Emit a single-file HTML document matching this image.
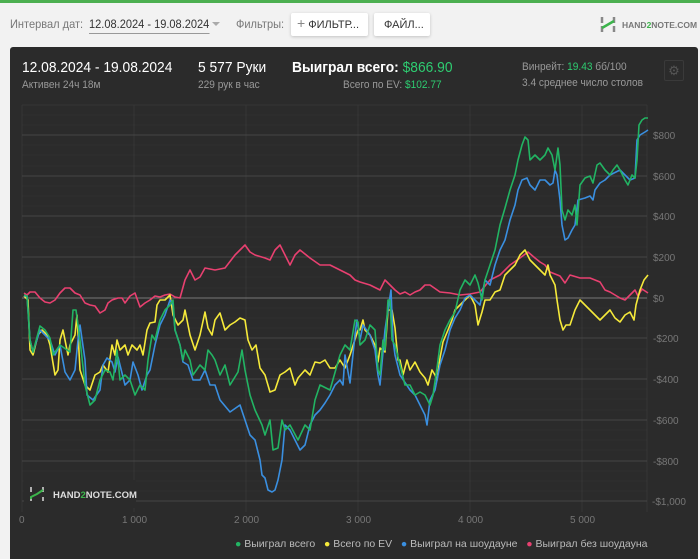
<!DOCTYPE html>
<html><head><meta charset="utf-8"><style>
*{margin:0;padding:0;box-sizing:border-box}
body{width:700px;height:559px;background:#f2f2f2;font-family:"Liberation Sans",sans-serif;position:relative;overflow:hidden}
.abs{position:absolute;white-space:nowrap}
.c{transform:scaleX(.92);transform-origin:left top}
</style></head><body>
<div class="abs" style="left:0;top:0;width:700px;height:3px;background:#4caf50"></div>
<div class="abs c" style="left:10px;top:17px;font-size:12px;color:#777">Интервал дат:</div>
<div class="abs c" style="left:89px;top:17px;font-size:12px;color:#333;border-bottom:1px solid #999;padding-bottom:2px">12.08.2024 - 19.08.2024</div>
<div class="abs" style="left:212px;top:22px;width:0;height:0;border-left:4px solid transparent;border-right:4px solid transparent;border-top:4px solid #aaa"></div>
<div class="abs c" style="left:236px;top:17px;font-size:12px;color:#777">Фильтры:</div>
<div class="abs" style="left:291px;top:13px;width:77px;height:23px;background:#fff;border-radius:2px;box-shadow:0 1px 3px rgba(0,0,0,.2);font-size:11px;color:#333;padding:5px 0 0 6px"><span style="color:#888;font-size:14px;line-height:11px">+</span> ФИЛЬТР...</div>
<div class="abs" style="left:374px;top:13px;width:56px;height:23px;background:#fff;border-radius:2px;box-shadow:0 1px 3px rgba(0,0,0,.2);font-size:11px;color:#333;padding:6px 0 0 10px">ФАЙЛ...</div>
<svg class="abs" style="left:600px;top:16px" width="16" height="17" viewBox="0 0 16 17"><path d="M2 1v6M2 10v6" stroke="#888" stroke-width="2.5"/><path d="M14 1v6M14 10v6" stroke="#888" stroke-width="2.5"/><path d="M2 12 L8 8.5 L14 5" stroke="#3cb44b" stroke-width="2.5" fill="none"/></svg>
<div class="abs" style="left:622px;top:20px;font-size:8.5px;font-weight:bold;color:#777">HAND<span style="color:#3cb44b">2</span>NOTE.COM</div>

<div class="abs" style="left:10px;top:47px;width:688px;height:512px;background:#2b2b2b;border-radius:3px 3px 0 0"></div>
<div class="abs c" style="left:22px;top:59px;font-size:15px;color:#fff">12.08.2024 - 19.08.2024</div>
<div class="abs c" style="left:22px;top:79px;font-size:11px;color:#999">Активен 24ч 18м</div>
<div class="abs c" style="left:198px;top:59px;font-size:15px;color:#fff">5 577 Руки</div>
<div class="abs c" style="left:198px;top:79px;font-size:11px;color:#999">229 рук в час</div>
<div class="abs c" style="left:292px;top:59px;font-size:15px;color:#fff;font-weight:bold">Выиграл всего: <span style="color:#2ecc71;font-weight:normal">$866.90</span></div>
<div class="abs c" style="left:343px;top:79px;font-size:11px;color:#999">Всего по EV: <span style="color:#2ecc71">$102.77</span></div>
<div class="abs c" style="left:522px;top:61px;font-size:11px;color:#999">Винрейт: <span style="color:#2ecc71">19.43</span> бб/100</div>
<div class="abs c" style="left:522px;top:77px;font-size:11px;color:#999">3.4 среднее число столов</div>
<div class="abs" style="left:664px;top:60px;width:20px;height:21px;border:1px solid #3a3a3a;border-radius:2px;color:#555;font-size:13px;text-align:center;line-height:19px">⚙</div>

<svg class="abs" style="left:0;top:0" width="700" height="559">
<g stroke="#2f2f2f" stroke-width="1">
<path d="M22 115H647M22 125H647M22 145H647M22 155H647M22 166H647M22 186H647M22 196H647M22 206H647M22 227H647M22 237H647M22 247H647M22 267H647M22 277H647M22 288H647M22 308H647M22 318H647M22 328H647M22 349H647M22 359H647M22 369H647M22 389H647M22 399H647M22 410H647M22 430H647M22 440H647M22 450H647M22 471H647M22 481H647M22 491H647"/>
</g>
<g stroke="#363636" stroke-width="1">
<path d="M22 105V512M134 105V512M246 105V512M358 105V512M470 105V512M582 105V512M647 105V512M22 105H647"/>
</g>
<g stroke="#454545" stroke-width="1">
<path d="M22 135H647M22 176H647M22 216H647M22 257H647M22 338H647M22 379H647M22 420H647M22 461H647M22 501H647"/>
</g>
<path d="M22 298H647" stroke="#777" stroke-width="1"/>
<g fill="none" stroke-width="1.6" stroke-linejoin="round">
<polyline stroke="#e84070" points="24,293 27,295 30,292 35,292 40,298 45,302 50,303 55,300 60,293 65,288 70,288 75,293 80,295 85,303 90,305 95,306 100,313 105,310 108,303 112,300 118,298 122,298 125,303 130,296 135,293 140,307 145,303 150,300 155,296 160,297 165,295 170,294 175,297 180,298 185,280 190,270 195,280 200,277 205,268 215,270 225,268 235,255 240,250 245,245 250,252 255,255 265,258 270,260 275,250 280,245 285,255 290,265 295,255 300,250 310,258 320,265 330,265 340,270 350,275 355,280 360,282 370,285 380,290 385,280 390,285 395,290 400,294 405,292 410,295 415,292 420,290 425,285 430,285 440,292 450,293 460,295 470,294 480,292 490,280 500,275 510,265 520,258 528,252 535,258 540,262 545,265 550,272 560,276 565,283 570,275 580,278 590,278 600,282 605,290 610,292 620,298 625,300 630,295 635,290 638,296 642,289 648,293"/>
<polyline stroke="#f5e93a" points="24,296 28,300 30,350 33,355 38,335 42,330 47,335 50,345 55,375 58,370 60,340 63,330 66,345 68,355 70,345 75,335 77,315 80,370 85,385 90,390 95,375 100,372 103,365 108,372 112,345 115,355 117,340 120,350 125,345 128,355 132,345 137,350 140,345 143,355 147,330 150,323 155,322 157,305 160,300 165,300 170,295 173,315 178,325 183,320 185,310 190,335 195,350 200,335 205,312 208,328 212,335 215,320 220,313 225,330 230,325 235,322 240,318 245,320 248,340 252,350 256,345 260,368 265,375 270,392 275,390 280,375 285,372 290,368 295,385 298,378 305,370 310,375 315,362 320,363 325,360 330,368 335,368 340,360 345,368 350,355 358,330 360,330 363,320 365,330 370,335 375,345 378,362 380,348 385,352 388,310 392,310 395,328 398,360 400,360 403,375 407,360 410,370 415,362 420,372 425,378 428,385 432,370 435,375 437,380 440,358 443,342 448,330 452,320 455,310 460,305 465,300 470,295 475,305 478,325 482,312 485,300 490,300 495,292 500,290 505,275 510,270 515,265 520,255 525,250 530,260 535,265 540,270 545,275 548,265 550,275 555,285 557,300 560,320 563,330 566,325 570,325 575,310 580,300 585,305 590,310 595,315 600,320 605,315 610,310 615,318 620,322 625,315 630,312 634,320 636,305 640,290 644,280 648,275"/>
<polyline stroke="#3a8fe0" points="24,296 27,296 30,340 33,352 40,330 45,335 50,340 55,355 60,345 65,372 70,380 75,370 78,340 80,325 85,360 87,395 93,400 100,390 103,365 107,358 112,362 115,372 118,357 125,385 130,380 133,362 138,375 142,390 147,375 150,370 155,345 160,325 165,315 170,300 173,305 175,330 180,345 183,362 188,365 193,380 200,380 205,370 210,385 215,385 220,400 230,412 240,405 245,420 250,435 255,440 260,460 262,475 265,478 268,490 272,492 275,490 278,480 282,460 285,425 290,430 295,440 300,450 305,445 310,425 315,415 320,410 325,403 330,395 335,385 340,380 343,385 345,355 350,383 355,335 357,320 360,340 363,325 370,335 375,350 378,375 380,385 385,330 388,310 391,290 393,340 395,355 400,375 410,390 415,395 420,405 425,415 427,425 430,400 435,390 440,365 445,350 450,330 455,318 460,310 465,298 470,295 475,300 480,305 485,280 490,285 495,265 500,250 505,240 510,220 515,205 518,190 522,180 527,178 530,185 535,190 540,180 545,180 550,185 553,183 555,170 557,175 560,200 562,225 565,240 568,238 572,230 575,225 578,200 585,198 590,196 593,200 595,190 600,183 605,180 610,175 620,170 625,175 630,180 635,178 637,140 640,135 645,132 648,130"/>
<polyline stroke="#22b463" points="24,295 27,296 30,340 33,352 40,326 45,330 50,338 53,355 60,345 70,352 73,310 76,310 80,340 85,385 90,405 95,400 100,380 105,370 110,372 113,380 117,350 120,380 125,375 130,380 135,395 140,385 145,390 148,360 152,335 155,340 160,320 165,310 170,305 173,300 175,330 180,345 183,360 185,350 190,360 193,375 200,365 205,370 208,350 212,355 215,360 220,375 225,365 230,385 238,372 242,350 245,370 250,395 255,410 262,425 265,435 270,420 273,450 278,448 282,420 285,430 290,425 298,440 305,425 310,430 315,400 320,385 330,390 340,355 345,345 350,350 355,320 358,322 360,345 365,340 370,325 375,330 378,370 380,375 383,340 385,350 388,300 390,300 392,340 395,345 400,365 405,385 410,385 415,395 420,392 425,395 430,405 433,395 437,368 440,345 445,330 450,320 455,312 460,290 465,280 470,285 475,275 478,283 482,300 485,280 490,265 495,250 500,225 505,208 510,190 515,175 518,160 522,145 525,137 528,140 530,160 535,155 540,160 545,155 548,148 552,155 555,170 558,148 560,165 562,210 565,220 568,210 572,215 575,205 577,225 580,185 585,178 590,176 593,183 597,165 600,163 605,170 610,175 613,170 617,165 620,170 625,180 628,185 632,175 635,178 637,160 639,125 642,120 645,118 648,118"/>
</g>
<rect x="24" y="480" width="112" height="28" fill="#2b2b2b"/>
<path d="M31 487v5M31 497v4M43 487v5M43 497v4" stroke="#ddd" stroke-width="1.5"/>
<path d="M31 499L31 497L37 494L43 490" stroke="#3cb44b" stroke-width="2" fill="none"/>
<g font-family="Liberation Sans, sans-serif" font-size="10" fill="#777">
<text x="653" y="139">$800</text><text x="653" y="180">$600</text><text x="653" y="220">$400</text><text x="653" y="261">$200</text><text x="653" y="302">$0</text><text x="653" y="342">-$200</text><text x="653" y="383">-$400</text><text x="653" y="424">-$600</text><text x="653" y="465">-$800</text><text x="652" y="505">-$1,000</text>
<text x="19" y="523">0</text><text x="122" y="523">1 000</text><text x="234" y="523">2 000</text><text x="346" y="523">3 000</text><text x="458" y="523">4 000</text><text x="570" y="523">5 000</text>
</g>
</svg>
<div class="abs" style="left:53px;top:490px;font-size:9.5px;font-weight:bold;color:#ddd">HAND<span style="color:#3cb44b">2</span>NOTE.COM</div>
<div class="abs" style="left:235px;top:538px;font-size:10.5px;color:#bbb">
<span style="color:#22b463">●</span> Выиграл всего &nbsp; <span style="color:#f5e93a">●</span> Всего по EV &nbsp; <span style="color:#3a8fe0">●</span> Выиграл на шоудауне &nbsp; <span style="color:#e84070">●</span> Выиграл без шоудауна</div>
</body></html>
